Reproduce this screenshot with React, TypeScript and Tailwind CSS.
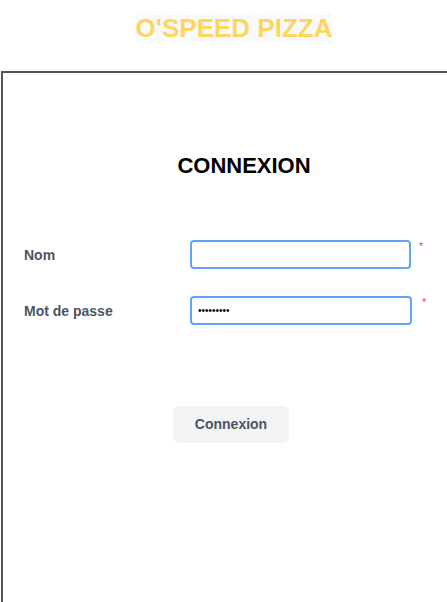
import React from "react";

export default function App() {
  const font = { fontFamily: '"Liberation Sans", Arial, sans-serif' };
  return (
    <div className="w-[447px] h-[602px] overflow-hidden bg-white" style={font}>
      <div className="w-[468px] flex justify-center pt-[13px]">
        <h1 className="bg-[#f9fafb] text-[#fed55f] font-bold text-[26px] leading-[30px]">O'SPEED PIZZA</h1>
      </div>
      <div className="ml-[1px] mt-[28px] w-[480px] h-[600px] border-2 border-[#555555]">
        <div className="pt-[80px] w-[480px]">
          <h2 className="text-center text-black font-bold text-[22px] leading-[25px] w-[482px]">CONNEXION</h2>
        </div>
        <div className="mt-[62px] flex flex-col gap-[27px]">
          <div className="flex items-center">
            <label className="w-[187px] pl-[21px] pt-[2px] text-[14px] font-bold text-[#4b5563]">Nom</label>
            <input className="w-[221px] h-[29px] border-2 border-[#60a5fa] rounded-[4px] outline-none px-[6px] text-[14px]" />
            <span className="self-start ml-[8px] mt-[1px] text-[#ef4444] text-[11px] leading-[11px]">*</span>
          </div>
          <div className="flex items-center">
            <label className="w-[187px] pl-[21px] pt-[2px] text-[14px] font-bold text-[#4b5563]">Mot de passe</label>
            <input type="password" readOnly defaultValue="123456789" className="w-[222px] h-[29px] border-2 border-[#60a5fa] rounded-[4px] outline-none px-[6px] text-[10px] text-black" />
            <span className="self-start ml-[10px] mt-[1px] text-[#ef4444] text-[11px] leading-[11px]">*</span>
          </div>
        </div>
        <div className="mt-[81px] pl-[170px]">
          <button className="w-[116px] h-[37px] bg-[#f3f4f6] rounded-[6px] text-[14px] font-bold text-[#4b5563]">Connexion</button>
        </div>
      </div>
    </div>
  );
}
